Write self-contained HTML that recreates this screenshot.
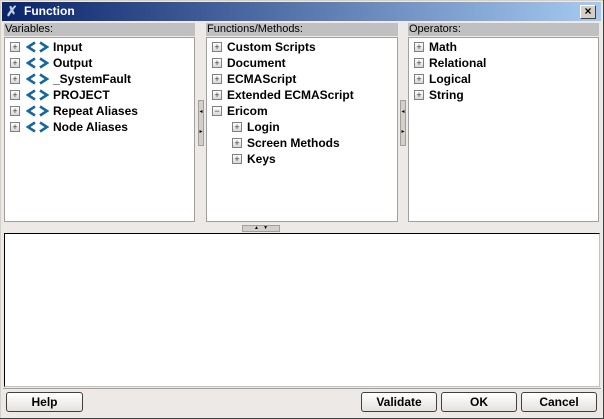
<!DOCTYPE html><html><head><style>
*{margin:0;padding:0;box-sizing:border-box}
body{width:604px;height:419px;background:#ece9e6;font-family:"Liberation Sans",sans-serif;position:relative;overflow:hidden;box-shadow:inset -1px -1px #404040,inset 1px 1px #d4d0c8}
.title{position:absolute;left:2px;top:2px;width:599px;height:19px;background:linear-gradient(90deg,#0a246a,#a6caf0);color:#fff;font-weight:bold;font-size:12px;line-height:19px;padding-left:22px}
.close{position:absolute;right:5px;top:3px;width:16px;height:14px;background:#d4d0c8;border:1px solid;border-color:#fff #404040 #404040 #fff;font-size:12px;line-height:11px;text-align:center;color:#000;font-weight:bold}
.lab{position:absolute;top:23px;height:13px;background:#c0c0c0;font-size:11px;line-height:13px;color:#000;padding-left:1px}
.list{position:absolute;top:37px;height:185px;background:#fff;border:1px solid #a0a0a0}
.row{position:absolute;height:16px;font-size:12px;font-weight:bold;line-height:16px;white-space:nowrap}
.pl{position:absolute;width:10px;height:10px;border:1px solid #808080;background:linear-gradient(#fff,#d8d8d8);font-size:9px;line-height:8px;text-align:center;color:#333;font-weight:normal}
.ang{position:absolute}
.grip{position:absolute;width:6px;height:46px;background:#d4d0c8;border:1px solid #a0a0a0;font-size:6px;color:#000;text-align:center;line-height:10px;padding-top:6px}
.btn{position:absolute;top:392px;height:20px;border:1px solid #404040;border-radius:3px;background:linear-gradient(#fff,#e4e2de);font-size:12px;font-weight:bold;text-align:center;line-height:18px}
.ta{position:absolute;left:4px;top:233px;width:596px;height:154px;background:#fff;border:1px solid #000;border-right-color:#c0c0c0;border-bottom-color:#c0c0c0}
</style></head><body>
<div class="title"><span style="position:absolute;left:4px;top:0;color:#c0d0e0;font-size:14px">✗</span>Function<div class="close">×</div></div>
<div class="lab" style="left:4px;width:191px">Variables:</div>
<div class="lab" style="left:206px;width:192px">Functions/Methods:</div>
<div class="lab" style="left:408px;width:191px">Operators:</div>
<div class="list" style="left:4px;width:191px"></div>
<div class="list" style="left:206px;width:192px"></div>
<div class="list" style="left:408px;width:191px"></div>
<div class="grip" style="left:198px;top:100px">◂<br><br>▸</div>
<div class="grip" style="left:400px;top:100px">◂<br><br>▸</div>
<div style="position:absolute;left:242px;top:225px;width:38px;height:7px;background:#d4d0c8;border:1px solid #a0a0a0;font-size:5px;line-height:5px;text-align:center">▲&nbsp;&nbsp;&nbsp;▼</div>
<div id="rows"></div>
<div class="ta"></div>
<div style="position:absolute;left:3px;top:388px;width:598px;height:1px;background:#a0a0a0"></div>
<div class="btn" style="left:6px;width:77px">Help</div>
<div class="btn" style="left:361px;width:76px">Validate</div>
<div class="btn" style="left:441px;width:76px">OK</div>
<div class="btn" style="left:521px;width:76px">Cancel</div>
<script>
var out='';
function r(x,y,t,ang,minus){
 out+='<div class="pl" style="left:'+(x)+'px;top:'+(y+3)+'px">'+(minus?'−':'+')+'</div>';
 var tx=x+15;
 if(ang){out+='<svg class="ang" width="24" height="12" style="left:'+(x+16)+'px;top:'+(y+2)+'px"><path d="M9 1.5L2 6l7 4.5M14 1.5L21 6l-7 4.5" fill="none" stroke="#15689e" stroke-width="2.6"/></svg>';tx=x+43;}
 out+='<div class="row" style="left:'+tx+'px;top:'+(y)+'px">'+t+'</div>';
}
var v=['Input','Output','_SystemFault','PROJECT','Repeat Aliases','Node Aliases'];
v.forEach(function(t,i){r(10,39+16*i,t,1)});
['Custom Scripts','Document','ECMAScript','Extended ECMAScript'].forEach(function(t,i){r(212,39+16*i,t)});
r(212,103,'Ericom',0,1);
['Login','Screen Methods','Keys'].forEach(function(t,i){r(232,119+16*i,t)});
['Math','Relational','Logical','String'].forEach(function(t,i){r(414,39+16*i,t)});
document.getElementById('rows').innerHTML=out;
</script>
</body></html>
